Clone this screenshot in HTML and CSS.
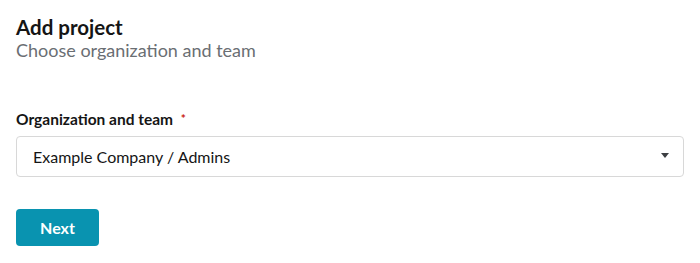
FILE: index.html
```html
<!DOCTYPE html>
<html>
<head>
<meta charset="utf-8">
<link rel="stylesheet" href="styles.css">
</head>
<body>
<div class="page">
  <header class="head">
    <h1 class="title">Add project</h1>
    <p class="subtitle">Choose organization and team</p>
  </header>
  <form class="form">
    <label class="label">Organization and team <span class="req">*</span></label>
    <div class="select">
      <span class="value">Example Company / Admins</span>
      <svg class="caret" width="8" height="5" viewBox="0 0 8 5"><path d="M0 0H8L4 5Z" fill="#3c3f42"/></svg>
    </div>
    <div class="actions">
      <button type="button" class="btn">Next</button>
    </div>
  </form>
</div>
</body>
</html>
```
FILE: styles.css
```css
* { box-sizing: border-box; }
body {
  margin: 0;
  background: #fff;
  font-family: Lato, "Liberation Sans", sans-serif;
  color: #151515;
}
.page {
  padding: 15px 16px 16px 16px;
}
.head { margin: 0; }
.title {
  margin: 0;
  font-size: 20.5px;
  font-weight: 700;
  line-height: 24px;
  color: #151515;
}
.subtitle {
  margin: 0;
  font-size: 18px;
  line-height: 22px;
  color: #6a6e73;
}
.form {
  margin-top: 48px;
  display: flex;
  flex-direction: column;
}
.label {
  font-size: 15.5px;
  font-weight: 700;
  line-height: 20px;
  color: #151515;
  margin-bottom: 7px;
}
.req {
  color: #c9190b;
  margin-left: 4px;
  font-size: 12px;
  vertical-align: top;
}
.select {
  height: 41px;
  border: 1px solid #d8d8d8;
  border-radius: 4px;
  display: flex;
  align-items: center;
  justify-content: space-between;
  padding: 0 14px 0 16px;
}
.value {
  font-size: 16px;
  color: #151515;
}
.caret {
  margin-top: -3px;
}
.actions {
  margin-top: 32px;
}
.btn {
  width: 83px;
  height: 37px;
  border: none;
  border-radius: 4px;
  background: #0993b0;
  color: #fff;
  font-family: Lato, "Liberation Sans", sans-serif;
  font-size: 16px;
  font-weight: 700;
}
```
